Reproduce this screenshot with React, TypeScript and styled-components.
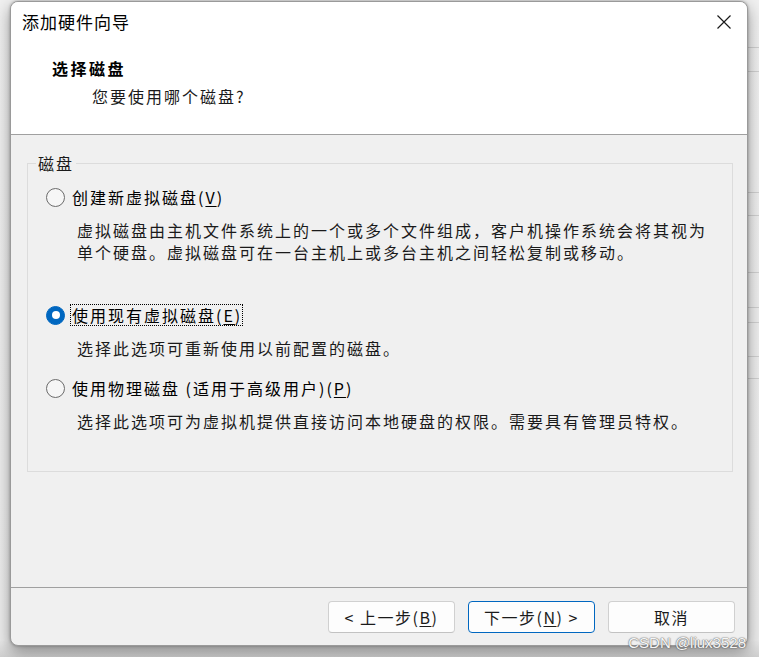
import React from "react";
import styled, { createGlobalStyle } from "styled-components";

const FONT = `"Noto Sans CJK SC", "Noto Sans", "Liberation Sans", sans-serif`;

const GlobalStyle = createGlobalStyle`
  html, body { margin: 0; padding: 0; }
  body {
    width: 759px;
    height: 657px;
    overflow: hidden;
    background: #e6e6e6;
    font-family: ${FONT};
  }
`;

const Desktop = styled.div`
  position: relative;
  width: 759px;
  height: 657px;
  overflow: hidden;
  background: #ececec;
`;

const BackWindow = styled.div`
  position: absolute;
  inset: 0;
  display: flex;
  justify-content: space-between;
  background: linear-gradient(#f0f0f0 0, #ececec 640px, #cfcfcf 657px);
`;

const BackColumn = styled.div<{ $w: number }>`
  width: ${(p) => p.$w}px;
  display: flex;
  flex-direction: column;
`;

const BackRow = styled.div<{ $h: number }>`
  height: ${(p) => p.$h}px;
  flex-shrink: 0;
  box-sizing: border-box;
  border-bottom: 1px solid #d0d0d0;
`;

const Dialog = styled.div`
  position: absolute;
  left: 10px;
  top: 1px;
  width: 738px;
  height: 645px;
  box-sizing: border-box;
  border: 1px solid #9a9a9a;
  border-radius: 8px;
  background: #f0f0f0;
  box-shadow: 0 6px 16px rgba(0, 0, 0, 0.38), 0 0 3px rgba(0, 0, 0, 0.3);
  display: flex;
  flex-direction: column;
  overflow: hidden;
  font-family: ${FONT};
  color: #000;
`;

const Header = styled.header`
  height: 133px;
  flex-shrink: 0;
  box-sizing: border-box;
  background: #ffffff;
  border-bottom: 1px solid #a0a0a0;
  display: flex;
  flex-direction: column;
`;

const TitleBar = styled.div`
  height: 40px;
  display: flex;
  align-items: center;
  justify-content: space-between;
  padding: 0 16px 0 11px;
`;

const Title = styled.h1`
  margin: 0;
  font-size: 17px;
  font-weight: 400;
  line-height: 22px;
  letter-spacing: 1px;
`;

const CloseButton = styled.button`
  border: 0;
  padding: 0;
  background: transparent;
  width: 14px;
  height: 14px;
  display: flex;
  color: #1a1a1a;
`;

const PageHeading = styled.h2`
  margin: 15px 0 0 41px;
  font-size: 16px;
  font-weight: 700;
  line-height: 22px;
  letter-spacing: 2.5px;
`;

const PageSubtitle = styled.p`
  margin: 6px 0 0 81px;
  font-size: 16px;
  line-height: 22px;
  letter-spacing: 2px;
  color: #1a1a1a;
`;

const Body = styled.main`
  flex: 1;
  box-sizing: border-box;
  padding: 18px 14px 0 16px;
  border-bottom: 1px solid #a0a0a0;
`;

const GroupBox = styled.fieldset`
  margin: 0;
  padding: 13px 0 0 18px;
  min-width: 0;
  height: 319px;
  box-sizing: border-box;
  border: 1px solid #dcdcdc;
`;

const GroupLegend = styled.legend`
  margin-left: -10px;
  padding: 0 2px;
  font-size: 16px;
  line-height: 20px;
  letter-spacing: 2px;
  color: #1a1a1a;
`;

const Option = styled.div<{ $after: number }>`
  margin-bottom: ${(p) => p.$after}px;
`;

const RadioRow = styled.label`
  display: flex;
  align-items: center;
  height: 22px;
`;

const RadioDot = styled.span<{ $checked?: boolean }>`
  position: relative;
  width: 19px;
  height: 19px;
  flex-shrink: 0;
  box-sizing: border-box;
  border-radius: 50%;
  border: 1px solid ${(p) => (p.$checked ? "#0067c0" : "#6b6b6b")};
  background: ${(p) => (p.$checked ? "#0067c0" : "#f6f6f6")};
  &::after {
    content: "";
    display: ${(p) => (p.$checked ? "block" : "none")};
    position: absolute;
    left: 50%;
    top: 50%;
    width: 8px;
    height: 8px;
    margin: -4px 0 0 -4px;
    border-radius: 50%;
    background: #ffffff;
  }
`;

const RadioText = styled.span<{ $focused?: boolean }>`
  margin-left: 5px;
  padding: 0 0 0 1px;
  border: 1px dotted ${(p) => (p.$focused ? "#000" : "transparent")};
  font-size: 16px;
  line-height: 20px;
  letter-spacing: 2px;
  white-space: nowrap;
`;

const Key = styled.span`
  text-decoration: underline;
  text-underline-offset: 2px;
`;

const Description = styled.p`
  margin: 11px 0 0 31px;
  max-width: 634px;
  font-size: 16px;
  line-height: 22px;
  letter-spacing: 2px;
  color: #1a1a1a;
`;

const Footer = styled.footer`
  height: 57px;
  flex-shrink: 0;
  box-sizing: border-box;
  padding: 13px 12px 0 0;
  display: flex;
  justify-content: flex-end;
  gap: 13px;
`;

const Button = styled.button<{ $primary?: boolean }>`
  width: 127px;
  height: 32px;
  box-sizing: border-box;
  border-radius: 4px;
  border: 1px solid ${(p) => (p.$primary ? "#0067c0" : "#d0d0d0")};
  border-bottom-color: ${(p) => (p.$primary ? "#0067c0" : "#c2c2c2")};
  background: #fdfdfd;
  font-family: ${FONT};
  font-size: 16px;
  letter-spacing: 1.5px;
  color: #1b1b1b;
  padding: 0;
`;

const Watermark = styled.div`
  position: absolute;
  right: 13px;
  bottom: 6px;
  font-family: "Liberation Sans", Arial, sans-serif;
  font-size: 15px;
  color: rgba(255, 255, 255, 0.95);
  text-shadow: 0 0 1px #777, 0 0 1px #777, 0 0 2px rgba(0, 0, 0, 0.4);
  white-space: nowrap;
`;

const backRows = [48, 24, 121, 23, 57, 35, 15, 34, 22, 300];

export default function App() {
  return (
    <>
      <GlobalStyle />
      <Desktop>
        <BackWindow>
          <BackColumn $w={10} />
          <BackColumn $w={12}>
            {backRows.map((h, i) => (
              <BackRow key={i} $h={h} />
            ))}
          </BackColumn>
        </BackWindow>
        <Dialog>
          <Header>
            <TitleBar>
              <Title>添加硬件向导</Title>
              <CloseButton aria-label="关闭">
                <svg width="14" height="14" viewBox="0 0 14 14">
                  <path d="M0.5 0.5 L13.5 13.5 M13.5 0.5 L0.5 13.5" stroke="currentColor" strokeWidth="1.2" fill="none" />
                </svg>
              </CloseButton>
            </TitleBar>
            <PageHeading>选择磁盘</PageHeading>
            <PageSubtitle>您要使用哪个磁盘?</PageSubtitle>
          </Header>
          <Body>
            <GroupBox>
              <GroupLegend>磁盘</GroupLegend>
              <Option $after={41}>
                <RadioRow>
                  <RadioDot />
                  <RadioText>
                    创建新虚拟磁盘(<Key>V</Key>)
                  </RadioText>
                </RadioRow>
                <Description>
                  虚拟磁盘由主机文件系统上的一个或多个文件组成，客户机操作系统会将其视为单个硬盘。虚拟磁盘可在一台主机上或多台主机之间轻松复制或移动。
                </Description>
              </Option>
              <Option $after={18}>
                <RadioRow>
                  <RadioDot $checked />
                  <RadioText $focused>
                    使用现有虚拟磁盘(<Key>E</Key>)
                  </RadioText>
                </RadioRow>
                <Description>选择此选项可重新使用以前配置的磁盘。</Description>
              </Option>
              <Option $after={0}>
                <RadioRow>
                  <RadioDot />
                  <RadioText>
                    使用物理磁盘 (适用于高级用户)(<Key>P</Key>)
                  </RadioText>
                </RadioRow>
                <Description>
                  选择此选项可为虚拟机提供直接访问本地硬盘的权限。需要具有管理员特权。
                </Description>
              </Option>
            </GroupBox>
          </Body>
          <Footer>
            <Button>
              &lt; 上一步(<Key>B</Key>)
            </Button>
            <Button $primary>
              下一步(<Key>N</Key>) &gt;
            </Button>
            <Button>取消</Button>
          </Footer>
        </Dialog>
        <Watermark>CSDN @liux3528</Watermark>
      </Desktop>
    </>
  );
}
